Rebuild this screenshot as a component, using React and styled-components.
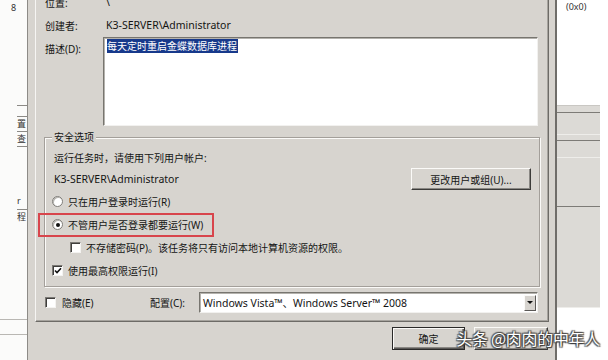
import React from "react";
import styled, { createGlobalStyle, css } from "styled-components";

const FACE = "#d7d4cf";
const UI_FONT = `"Noto Sans", "Noto Sans CJK SC", sans-serif`;

const Global = createGlobalStyle`
  html, body { margin: 0; padding: 0; background: #fff; }
  body { font-family: ${UI_FONT}; color: #141414; }
`;

const Screen = styled.div`
  position: relative;
  width: 608px;
  height: 360px;
  overflow: hidden;
  display: flex;
  background: #fff;
`;

/* ---------- background windows ---------- */
const BackLeft = styled.div`
  flex: none;
  width: 27px;
  display: flex;
  flex-direction: column;
  background: #fbfbfa;
  font-size: 9px;
  color: #333;
`;

const BackLeftNum = styled.div`
  height: 14px;
  line-height: 14px;
  padding-left: 11px;
  margin-top: 1px;
`;

const BackLeftCell = styled.div`
  height: ${(p) => p.$h}px;
  margin-top: ${(p) => p.$mt || 0}px;
  margin-left: 17px;
  border-top: ${(p) => (p.$line ? "1px solid #8c8a86" : "none")};
  line-height: ${(p) => p.$h}px;
  overflow: hidden;
  white-space: nowrap;
  font-size: 9px;
`;

const BackLeftRule = styled.div`
  height: 0;
  margin-top: ${(p) => p.$mt}px;
  border-top: 1px solid #b9b7b3;
`;

const BackRight = styled.div`
  flex: 1;
  display: flex;
  flex-direction: column;
  background: #fff;
  font-size: 9px;
  color: #333;
`;

const BackRightText = styled.div`
  height: 16px;
  line-height: 14px;
  padding-left: 9px;
`;

const BackRightRow = styled.div`
  height: ${(p) => p.$h}px;
  margin-right: 8px;
  border-bottom: 1px solid ${(p) => p.$c};
  background: ${(p) => p.$bg || "transparent"};
`;

/* ---------- dialog frame ---------- */
const Dialog = styled.div`
  flex: none;
  width: 530px;
  box-sizing: border-box;
  background: ${FACE};
  border-left: 1px solid #8d8b87;
  border-right: 2px solid #6f6d69;
  padding: 0 6px 0 7px;
  display: flex;
  flex-direction: column;
`;

const TabPage = styled.div`
  height: 322px;
  box-sizing: border-box;
  border-left: 1px solid #f6f5f3;
  border-right: 1px solid #6d6b67;
  border-bottom: 1px solid #6d6b67;
  box-shadow: inset -1px -1px 0 #a6a39e;
  padding: 0 10px 0 9px;
  display: flex;
  flex-direction: column;
`;

const InfoRow = styled.div`
  display: grid;
  grid-template-columns: 58px 1fr;
  align-items: center;
  height: 20px;
  margin-top: ${(p) => p.$mt}px;
`;

const Label = styled.span`
  font-size: 10px;
  white-space: nowrap;
`;

const Value = styled.span`
  font-size: 10.5px;
  padding-left: ${(p) => (p.$flush ? 0 : 3)}px;
  white-space: nowrap;
`;

const DescRow = styled.div`
  display: grid;
  grid-template-columns: 58px 1fr;
  height: 89px;
  margin-top: 2px;
`;

const DescLabel = styled(Label)`
  padding-top: 4px;
`;

const TextArea = styled.div`
  box-sizing: border-box;
  height: 89px;
  background: #fff;
  border: 1px solid;
  border-color: #77756f #f2f1ef #f2f1ef #77756f;
  box-shadow: inset 1px 1px 0 #b4b2ad;
  padding: 3px 0 0 3px;
  font-size: 10px;
  line-height: 11px;
`;

const Selected = styled.span`
  background: #17398b;
  color: #fff;
  padding: 0 1px 0 0;
`;

/* ---------- group box ---------- */
const Group = styled.div`
  position: relative;
  height: 150px;
  box-sizing: border-box;
  margin: 11px -2px 0 -1px;
  border: 1px solid #a39f9a;
  box-shadow: inset 1px 1px 0 #fbfaf8, 1px 1px 0 #fbfaf8;
  padding: 11px 8px 0 7px;
  display: flex;
  flex-direction: column;
`;

const Legend = styled.span`
  position: absolute;
  top: -8px;
  left: 7px;
  padding: 0 2px;
  background: ${FACE};
  font-size: 10px;
  line-height: 14px;
`;

const StatusText = styled.div`
  height: 19px;
  line-height: 19px;
  padding-left: 2px;
  font-size: 10px;
`;

const AccountRow = styled.div`
  height: 22px;
  display: flex;
  align-items: center;
  justify-content: space-between;
  padding-left: 2px;
`;

const Option = styled.div`
  position: relative;
  height: 23px;
  display: flex;
  align-items: center;
  gap: 5px;
  padding-left: ${(p) => p.$indent || 0}px;
  font-size: 10px;
  white-space: nowrap;
`;

const Highlight = styled.span`
  position: absolute;
  left: -14px;
  top: 0;
  width: 176px;
  height: 24px;
  box-sizing: border-box;
  border: 2px solid #d8454c;
  pointer-events: none;
`;

const RadioMark = styled.span`
  flex: none;
  width: 11px;
  height: 11px;
  box-sizing: border-box;
  border-radius: 50%;
  background: #fff;
  border: 1px solid #7f7d79;
  box-shadow: inset 1px 1px 0 #b8b6b1;
  display: flex;
  align-items: center;
  justify-content: center;
  &::after {
    content: "";
    width: 4px;
    height: 4px;
    border-radius: 50%;
    background: ${(p) => (p.$on ? "#111" : "transparent")};
  }
`;

const CheckMark = styled.span`
  flex: none;
  width: 11px;
  height: 11px;
  box-sizing: border-box;
  background: #fff;
  border: 1px solid;
  border-color: #7b7975 #f4f3f1 #f4f3f1 #7b7975;
  box-shadow: inset 1px 1px 0 #3f3e3c;
  display: flex;
  align-items: center;
  justify-content: center;
  svg { display: block; }
`;

const Tick = () => (
  <svg width="8" height="8" viewBox="0 0 8 8">
    <path d="M1 3.5 L3 5.5 L7 1.2" fill="none" stroke="#111" strokeWidth="1.6" />
  </svg>
);

const Radio = ({ on, children }) => (
  <>
    <RadioMark $on={on} />
    <span>{children}</span>
  </>
);

const Check = ({ on, children }) => (
  <>
    <CheckMark>{on ? <Tick /> : null}</CheckMark>
    <span>{children}</span>
  </>
);

/* ---------- buttons ---------- */
const Button = styled.div`
  flex: none;
  width: ${(p) => p.$w}px;
  height: ${(p) => p.$h || 22}px;
  box-sizing: border-box;
  display: flex;
  align-items: center;
  justify-content: center;
  font-size: 10px;
  background: ${FACE};
  border: 1px solid;
  border-color: #fbfaf8 #3c3b39 #3c3b39 #fbfaf8;
  box-shadow: inset -1px -1px 0 #8a8884;
  ${(p) =>
    p.$default &&
    css`
      border-color: #2a2928;
      box-shadow: inset 1px 1px 0 #fbfaf8, inset -1px -1px 0 #5a5856,
        inset -2px -2px 0 #8a8884;
    `}
`;

/* ---------- bottom config row ---------- */
const ConfigRow = styled.div`
  height: 21px;
  margin-top: 5px;
  display: flex;
  align-items: center;
  font-size: 10px;
`;

const HiddenOpt = styled.div`
  width: 105px;
  display: flex;
  align-items: center;
  gap: 6px;
`;

const ConfigLabel = styled.span`
  width: 49px;
  white-space: nowrap;
`;

const Combo = styled.div`
  flex: 1;
  height: 21px;
  box-sizing: border-box;
  background: #fff;
  border: 1px solid;
  border-color: #77756f #f2f1ef #f2f1ef #77756f;
  box-shadow: inset 1px 1px 0 #b4b2ad;
  display: flex;
  align-items: center;
  padding: 0 1px 0 3px;
`;

const ComboText = styled.span`
  flex: 1;
  font-size: 10.5px;
  white-space: nowrap;
`;

const ComboArrow = styled.span`
  width: 12px;
  height: 16px;
  box-sizing: border-box;
  background: ${FACE};
  border: 1px solid;
  border-color: #fbfaf8 #5a5856 #5a5856 #fbfaf8;
  display: flex;
  align-items: center;
  justify-content: center;
  &::after {
    content: "";
    border-left: 3px solid transparent;
    border-right: 3px solid transparent;
    border-top: 3px solid #111;
  }
`;

const ButtonRow = styled.div`
  display: flex;
  justify-content: flex-end;
  gap: 9px;
  padding: 5px 1px 0 0;
`;

const Watermark = styled.div`
  position: absolute;
  right: 8px;
  top: 327px;
  font-family: "Noto Sans CJK SC", sans-serif;
  font-size: 16px;
  line-height: 22px;
  color: #fff;
  letter-spacing: -0.3px;
  text-shadow: 0 0 1px #3a3a3a, 1px 1px 1px #3a3a3a, -1px -1px 1px #555,
    1px -1px 1px #555, -1px 1px 1px #555;
  white-space: nowrap;
`;

export default function App() {
  return (
    <>
      <Global />
      <Screen>
        <BackLeft>
          <BackLeftNum>8</BackLeftNum>
          <BackLeftCell $h={10} $mt={90} $line />
          <BackLeftCell $h={14} $line>置</BackLeftCell>
          <BackLeftCell $h={14} $line>查</BackLeftCell>
          <BackLeftCell $h={10} $line />
          <BackLeftCell $h={16} $mt={36}>r</BackLeftCell>
          <BackLeftCell $h={14} $line>程</BackLeftCell>
          <BackLeftRule $mt={95} />
          <BackLeftRule $mt={14} />
        </BackLeft>

        <Dialog>
          <TabPage>
            <InfoRow $mt={-8}>
              <Label>位置:</Label>
              <Value>\</Value>
            </InfoRow>
            <InfoRow $mt={3}>
              <Label>创建者:</Label>
              <Value>K3-SERVER\Administrator</Value>
            </InfoRow>
            <DescRow>
              <DescLabel>描述(D):</DescLabel>
              <TextArea>
                <Selected>每天定时重启金蝶数据库进程</Selected>
              </TextArea>
            </DescRow>

            <Group>
              <Legend>安全选项</Legend>
              <StatusText>运行任务时，请使用下列用户帐户:</StatusText>
              <AccountRow>
                <Value $flush>K3-SERVER\Administrator</Value>
                <Button $w={120} $h={22}>更改用户或组(U)...</Button>
              </AccountRow>
              <Option>
                <Radio>只在用户登录时运行(R)</Radio>
              </Option>
              <Option>
                <Radio on>不管用户是否登录都要运行(W)</Radio>
                <Highlight />
              </Option>
              <Option $indent={18}>
                <Check>不存储密码(P)。该任务将只有访问本地计算机资源的权限。</Check>
              </Option>
              <Option>
                <Check on>使用最高权限运行(I)</Check>
              </Option>
            </Group>

            <ConfigRow>
              <HiddenOpt>
                <Check>隐藏(E)</Check>
              </HiddenOpt>
              <ConfigLabel>配置(C):</ConfigLabel>
              <Combo>
                <ComboText>Windows Vista™、Windows Server™ 2008</ComboText>
                <ComboArrow />
              </Combo>
            </ConfigRow>
          </TabPage>

          <ButtonRow>
            <Button $w={73} $h={23} $default>确定</Button>
            <Button $w={74} $h={23}>取消</Button>
          </ButtonRow>
        </Dialog>

        <BackRight>
          <BackRightText>(0x0)</BackRightText>
          <BackRightRow $h={89} $c="#c9c7c3" />
          <BackRightRow $h={6} $c="#7d7b77" $bg="#dcdad6" />
          <BackRightRow $h={21} $c="#eeedea" $bg="#dcdad6" />
          <BackRightRow $h={5} $c="#7d7b77" $bg="#dcdad6" />
          <BackRightRow $h={16} $c="#eeedea" $bg="#dcdad6" />
          <BackRightRow $h={48} $c="#7d7b77" $bg="#dcdad6" />
          <BackRightRow $h={100} $c="#eeedea" $bg="#dcdad6" />
        </BackRight>

        <Watermark>头条 @肉肉的中年人</Watermark>
      </Screen>
    </>
  );
}
